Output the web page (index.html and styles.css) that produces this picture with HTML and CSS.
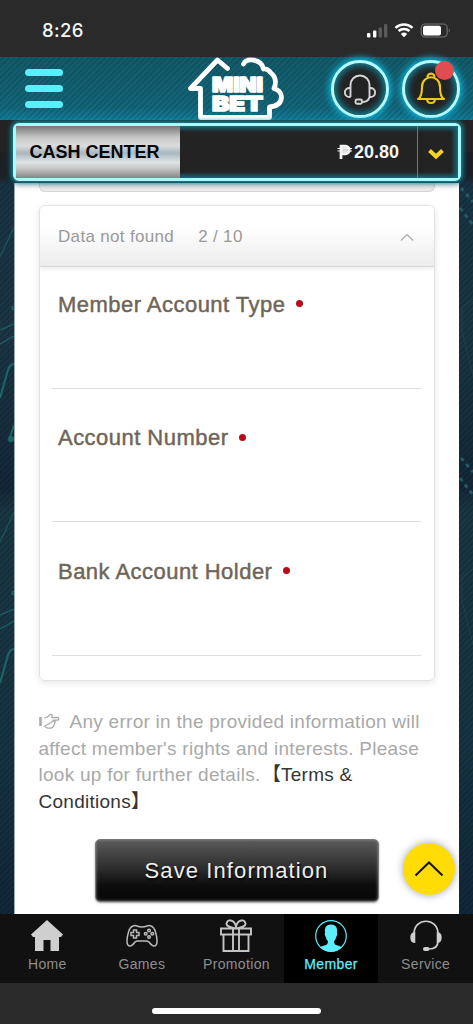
FILE: index.html
```html
<!DOCTYPE html>
<html lang="en">
<head>
<meta charset="utf-8">
<meta name="viewport" content="width=device-width, initial-scale=1">
<title>Mini Bet</title>
<link rel="stylesheet" href="styles.css">
</head>
<body>
<div class="app">
  <div class="status">
    <span class="time">8:26</span>
    <svg class="signals" width="86" height="18" viewBox="0 0 86 18">
      <rect x="1" y="11" width="3.4" height="4.6" rx="1" fill="#fff"/>
      <rect x="7" y="8.5" width="3.4" height="7.1" rx="1" fill="#fff"/>
      <rect x="12.6" y="5.5" width="3.4" height="10.1" rx="1" fill="#5a5a5a"/>
      <rect x="18" y="2" width="3.4" height="13.6" rx="1" fill="#5a5a5a"/>
      <g fill="none" stroke="#fff" stroke-width="2.5">
        <path d="M29.5 5.8a12.4 12.4 0 0 1 17 0"/>
        <path d="M32.6 9a8 8 0 0 1 10.8 0"/>
      </g>
      <path d="M34.8 11.9a4.8 4.8 0 0 1 6.4 0L38 15.2z" fill="#fff"/>
      <rect x="55.2" y="2" width="26" height="13" rx="4" fill="none" stroke="#777" stroke-width="1.1"/>
      <rect x="57" y="3.8" width="18" height="9.6" rx="2" fill="#fff"/>
      <path d="M82.8 6.5q2 2 0 4z" fill="#777"/>
    </svg>
  </div>

  <header class="header">
    <div class="menu"><i></i><i></i><i></i></div>
    <svg class="logo" width="102" height="66" viewBox="0 0 102 66">
      <path d="M41.500 11.500 31.500 3 4.500 31.500h10v29H83.500V50Q95 49 95.500 40 95.500 34 88 31.500 92 22 85 16 81 11 77.500 12 76 4 66.500 3 60 2 57.500 7" fill="none" stroke="#fff" stroke-width="4.800" stroke-linejoin="round" stroke-linecap="round"/>
      <g class="logo-text">
        <text x="26" y="34.500" textLength="51" lengthAdjust="spacingAndGlyphs">MINI</text>
        <text x="26" y="54" textLength="51" lengthAdjust="spacingAndGlyphs">BET</text>
      </g>
    </svg>
    <div class="round support">
      <svg width="36" height="36" viewBox="0 0 36 36" fill="none" stroke="#d5d5d5" stroke-width="1.900">
        <path d="M8.500 26V14a9.500 9.500 0 0 1 19 0v12M8.500 17C1 16 1 27 8.500 26M27.500 17c7.500-1 7.500 10 0 9-1 4-3 5-7 5"/>
        <rect x="13.500" y="28.500" width="6.500" height="4.200" rx="1.500"/>
      </svg>
    </div>
    <div class="round bell">
      <svg width="36" height="36" viewBox="0 0 36 36" fill="none" stroke="#edc91c" stroke-width="2.100" stroke-linejoin="round">
        <path d="M5 28q4-2 4-12c0-13 18-13 18 0q0 10 4 12zM14.500 7.500C13 1 23 1 21.500 7.500M14 28q0 4 4 4t4-4"/>
      </svg>
      <b class="badge"></b>
    </div>
  </header>

  <div class="cash-row">
    <div class="cash">
      <div class="cash-title">CASH CENTER</div>
      <div class="cash-value">
        <svg width="16" height="16" viewBox="0 0 16 16" fill="none" stroke="#f5f5f5">
          <path d="M4 15V2.200h4.300c5.400 0 5.400 7.600 0 7.600H4" stroke-width="2.700" fill="#ccc"/>
          <path d="M.5 4.500h14.500M.5 7h14.500" stroke-width="1.200"/>
        </svg>
        <span>20.80</span>
      </div>
      <div class="cash-toggle">
        <svg width="18" height="14" viewBox="0 0 18 14"><path d="m2.500 3.500 6.500 6 6.500-6" fill="none" stroke="#f7d527" stroke-width="4"/></svg>
      </div>
    </div>
  </div>

  <div class="page">
    <svg class="side" viewBox="0 0 14 731" preserveAspectRatio="none">
      <g fill="none" stroke="#1f7773" stroke-width="1.500" opacity=".75">
        <g id="circuit">
          <path d="M0 77 8 60 14 47" opacity=".6"/>
          <path d="M0 150 14 144M0 164l14-8" opacity=".8"/><path d="M0 218 8 190q2-6 6-6" stroke-width="2.200"/>
          <circle cx="13.500" cy="128" r="1.500"/>
        </g>
        <path d="M10 257 14 245" stroke-width="2"/><circle cx="11" cy="259" r="2.500" fill="#1f7773"/>
        <use href="#circuit" y="285"/>
      </g>
    </svg>
    <main class="content">
      <div class="prev-card"></div>
      <section class="card">
        <div class="card-head">
          <span>Data not found</span><span class="count">2 / 10</span>
          <svg width="16" height="10" viewBox="0 0 16 10"><path d="m2 8.500 6-6 6 6" fill="none" stroke="#aaa" stroke-width="1.100"/></svg>
        </div>
        <div class="field"><label>Member Account Type</label><i></i></div>
        <div class="field"><label>Account Number</label><i></i></div>
        <div class="field"><label>Bank Account Holder</label><i></i></div>
      </section>
      <p class="note"><svg width="21" height="17" viewBox="0 0 21 17" fill="none" stroke="#aaa" stroke-width="1.300"><path d="M1.500 4v9" stroke-width="2.600"/><path d="M5.500 5 8.500 4 11 1.500q3-.5 2 3h6q1.600 1.300 0 2.700h-5.500M15.500 7.500q1.500 1.300 0 2.700.5 1.500-1 2.500-.5 2.500-3 2.500H8.500l-3-2z"/></svg>Any error in the provided information will<br>affect member's rights and interests. Please<br>look up for further details. <a><span class="bracket open">【</span>Terms &amp;<br>Conditions<span class="bracket">】</span></a></p>
      <button class="save">Save Information</button>
      <div class="top">
        <svg width="30" height="18" viewBox="0 0 30 18"><path d="m1.500 15.500 13.500-13 13.500 13" fill="none" stroke="#17140a" stroke-width="2"/></svg>
      </div>
    </main>
    <svg class="side" viewBox="0 0 14 731" preserveAspectRatio="none">
      <g fill="none" stroke="#245158" stroke-width="1" opacity=".75">
        <g id="nodes">
          <path d="M2 8 14 22M1 28l13 17" stroke="#266b70" stroke-width="3" stroke-dasharray="4 4"/>
          <path d="M14 119 3 127v24l11 44" opacity=".6"/>
        </g>
        <use href="#nodes" y="270"/>
      </g>
    </svg>
  </div>

  <nav class="nav">
    <div class="tab">
      <svg width="34" height="34" viewBox="0 0 34 34"><path d="M17 1 33 15.500 31 18h-2v14h-8.500V21h-7v11H5V18H3l-2-2.500z" fill="#cfcfcf"/></svg>
      <span>Home</span>
    </div>
    <div class="tab">
      <svg width="34" height="34" viewBox="0 0 34 34" fill="none" stroke="#b9b9b9" stroke-width="1.500">
        <path d="M8 7q2-1 4 0 5 2 10 0 2-1 4 0 3 1 4.500 6t1.500 9q0 5-3 5-2 0-5-4-1-1-3-1h-8q-2 0-3 1-3 4-5 4-3 0-3-5 0-4 1.500-9T8 7z"/>
        <path d="M8.500 11h3v2.500H14v3h-2.500V19h-3v-2.500H6v-3h2.500z"/>
        <circle cx="24" cy="11.500" r="1.300"/><circle cx="24" cy="18" r="1.300"/><circle cx="20.700" cy="14.800" r="1.300"/><circle cx="27.300" cy="14.800" r="1.300"/>
      </svg>
      <span>Games</span>
    </div>
    <div class="tab">
      <svg width="34" height="34" viewBox="0 0 34 34" fill="none" stroke="#c4c4c4" stroke-width="1.900">
        <path d="M2 9.500h30v6H2zM4.500 15.500V32h25V15.500M14 9.500V32M20 9.500V32M17 9.500C12 8 7 8 7.500 4.500 8.500 0 15 0 17 7.500 19 0 25.500 0 26.500 4.500 27 8 22 8 17 9.500z"/>
      </svg>
      <span>Promotion</span>
    </div>
    <div class="tab active">
      <svg width="34" height="34" viewBox="0 0 34 34"><circle cx="17" cy="17" r="15.300" fill="none" stroke="#5ceefb" stroke-width="1.200"/><path d="M17 5.500c5.500 0 6.500 4 6 8.500q1 1-.7 4-.8 3-2.300 4 0 3 2 4 4 1 6 2.300Q23 33 17 33T6 28.300Q8 27 12 26q2-1 2-4-1.500-1-2.300-4-1.700-3-.7-4c-.5-4.500.5-8.500 6-8.500z" fill="#5ceefb"/></svg>
      <span>Member</span>
    </div>
    <div class="tab">
      <svg width="34" height="34" viewBox="0 0 34 34" fill="none" stroke="#cfcfcf" stroke-width="1.700"><path d="M5 15C5-2 29-2 29 15M29 22q0 8-9 8"/><path d="M6.300 13v11q-5 0-5-5.500t5-5.500zM27.700 13v11q5 0 5-5.500t-5-5.500z" fill="#cfcfcf" stroke="none"/><rect x="14" y="28" width="6.500" height="4" rx="2" fill="#cfcfcf" stroke="none"/></svg>
      <span>Service</span>
    </div>
  </nav>
  <div class="gesture"><div class="pill"></div></div>
</div>
</body>
</html>
```
FILE: styles.css
```css
* { box-sizing: border-box; }
body { margin: 0; background: #2a2a2a; font-family: "Liberation Sans", Arial, sans-serif; }
.app { width: 473px; height: 1024px; display: flex; flex-direction: column; overflow: hidden; }
svg { display: block; flex: none; }

.status { height: 57px; flex: none; display: flex; justify-content: space-between; align-items: flex-start; padding: 20px 18px 0 42px; background: #2a2a2a; }
.time { font: 500 18.5px/21px Inter, sans-serif; color: #f4f4f4; letter-spacing: .4px; }
.signals { margin-top: 1.500px; margin-right: 3px; }

.header { height: 63px; flex: none; display: flex; align-items: flex-start; padding-left: 25px; background: repeating-linear-gradient(135deg, transparent 0 2px, rgba(0,30,40,.16) 2px 4px), linear-gradient(#125b69, #14667a 80%, #117e9b); }
.menu { width: 38px; padding-top: 12px; display: flex; flex-direction: column; gap: 9px; }
.menu i { height: 7px; border-radius: 3.5px; background: #5aeffd; }
.logo { margin-left: 122.500px; }
.logo-text { font: 900 20px/1 Inter, sans-serif; fill: #fff; stroke: #fff; stroke-width: 1.600px; stroke-linejoin: round; }
.round { position: relative; width: 58px; height: 58px; flex: none; margin-top: 3px; border: 3.5px solid #b2fbff; border-radius: 50%; background: #232323; box-shadow: 0 0 7px 2px #11b6da, inset 0 0 7px 2px #118ba3; display: flex; align-items: center; justify-content: center; }
.support { margin-left: 43.500px; }
.bell { margin-left: 13px; }
.badge { position: absolute; top: -2.500px; right: 3px; width: 19px; height: 19px; border-radius: 50%; background: #e04c50; }

.cash-row { height: 63px; flex: none; padding: 3px 12.500px 0; background: linear-gradient(#232323 0 31px, #1c2025 32px 55px, #1b2b37); position: relative; z-index: 1; margin-bottom: -3px; clip-path: inset(-6px 0 -14px 0); }
.cash { height: 58px; display: flex; border: 3.500px solid #a9fafb; border-radius: 6px; background: #232323; box-shadow: 0 0 5px 2px #138ba2, 0 4px 6px rgba(0,0,0,.25); }
.cash-title { width: 164px; padding: 1.500px 0 0 14px; font: bold 18px/49px "Liberation Sans", Arial, sans-serif; color: #070707; background: linear-gradient(#777 0, #c7c7c7 22%, #dcdcdc 38%, #a9b7bf 52%, #dfe4e6 70%, #c8c8c8 81%, #858585 100%); }
.cash-value { flex: 1; display: flex; align-items: center; justify-content: flex-end; padding-right: 18px; gap: 1px; font: bold 18px/49px "Liberation Sans", Arial, sans-serif; color: #f5f5f5; background: linear-gradient(#17697a, transparent 6px calc(100% - 6px), #17697a); }
.cash-toggle { width: 40.500px; border-left: 1px solid #777; display: flex; align-items: center; justify-content: center; padding: 3px 3px 0 0; background: linear-gradient(#17697a, transparent 6px calc(100% - 6px), #17697a), linear-gradient(to left, #17697a, transparent 7px); }

.page { height: 734px; flex: none; display: grid; grid-template-columns: 14px 445px 14px; background: repeating-linear-gradient(135deg, transparent 0 2px, rgba(0,0,0,.14) 2px 4px), linear-gradient(#193444 0, #1b3745 20%, #142839 42%, #1a3743 45%, #163543 75%, #12283a); }
.side { width: 14px; height: 731px; overflow: hidden; }
.content { background: #fff; padding: 0 24.500px 0 24.500px; border-left: 1px solid #9cabb1; position: relative; }
.prev-card { height: 12px; margin-left: -.5px; border: 1px solid #d6d6d6; border-top: 0; border-radius: 0 0 6px 6px; background: #ededed; }
.card { height: 476px; margin: 13px 0 0 -.5px; border: 1.500px solid #e2e2e2; border-radius: 6px; box-shadow: 0 2px 7px rgba(0,0,0,.1); overflow: hidden; }
.card-head { height: 61px; display: flex; align-items: center; padding: 1px 19px 0 18px; font-size: 17px; letter-spacing: .33px; color: #999; background: linear-gradient(#fff 35%, #ececec); border-bottom: 1px solid #d8d8d8; box-shadow: 0 2px 4px rgba(0,0,0,.08); }
.count { margin-left: 24px; flex: 1; }
.field { height: 121.500px; margin: 0 13px 0 12px; padding: 24.500px 6px 0; border-bottom: 1.500px solid #dedede; display: flex; align-items: flex-start; }
.field + .field { height: 133.500px; padding-top: 36.500px; }
.field label { font-size: 22px; line-height: 25px; letter-spacing: .47px; color: #6f6557; -webkit-text-stroke: .45px #6f6557; }
.field i { width: 7px; height: 7px; margin: 8.500px 0 0 11px; border-radius: 50%; background: #b80c18; }

.note { margin: 28px -10px 0 -1px; font-size: 19px; line-height: 26.700px; letter-spacing: .27px; color: #a9a9a9; white-space: nowrap; }
.note svg { display: inline-block; vertical-align: -1.500px; margin-right: 10px; }
.note a { color: #353535; }
.bracket { font-family: "Noto Sans CJK SC", sans-serif; line-height: 1; display: inline-block; width: 9px; overflow: visible; }
.bracket.open { width: 19px; margin-left: -4px; }
.save { display: block; width: 284px; height: 63px; margin: 23px 0 0 55px; padding: 0; border: 1.500px solid #777; border-radius: 5px; background: linear-gradient(#5b5b5b, #292929 50%, #0c0c0c 75%, #080808); box-shadow: inset 0 0 3px 0 #888, 0 1px 2px #999; font: 22px "Liberation Sans", Arial, sans-serif; letter-spacing: 1.100px; color: #eee; text-shadow: 1px 2px 2px #000; padding-top: 2px; }
.top { position: absolute; right: 4.500px; bottom: 19px; width: 52px; height: 52px; border-radius: 50%; background: #ffdc05; box-shadow: 0 0 7px 1px rgba(80,90,140,.45); display: flex; align-items: center; justify-content: center; }

.nav { height: 69px; flex: none; display: grid; grid-template-columns: repeat(5, 1fr); background: #111; }
.tab { padding-top: 5px; display: flex; flex-direction: column; align-items: center; font-size: 14px; line-height: 18px; letter-spacing: .35px; color: #8e8e8e; }
.tab span { margin-top: 2px; }
.active { background: #000; color: #5ceefb; -webkit-text-stroke: .25px #5ceefb; }
.gesture { height: 41px; flex: none; background: #2a2a2a; display: flex; justify-content: center; padding-top: 25px; }
.pill { width: 169px; height: 6px; border-radius: 3px; background: #fff; }
```
